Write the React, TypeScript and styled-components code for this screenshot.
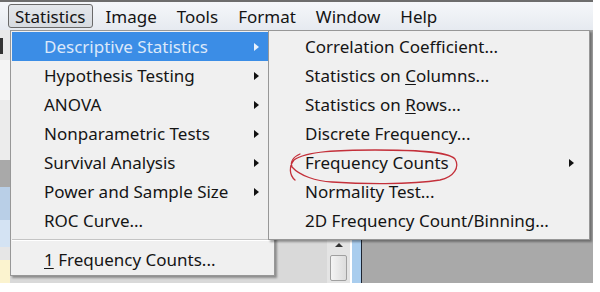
import React from "react";
import styled, { createGlobalStyle } from "styled-components";

const GlobalStyle = createGlobalStyle`
  html, body {
    margin: 0;
    padding: 0;
    background: #fff;
  }
  body {
    font-family: "Noto Sans", "Open Sans", sans-serif;
  }
`;

const menuBarItems = ["Statistics", "Image", "Tools", "Format", "Window", "Help"];

const statItems = [
  { label: "Descriptive Statistics", sub: true },
  { label: "Hypothesis Testing", sub: true },
  { label: "ANOVA", sub: true },
  { label: "Nonparametric Tests", sub: true },
  { label: "Survival Analysis", sub: true },
  { label: "Power and Sample Size", sub: true },
  { label: "ROC Curve...", sub: false },
];

// background window pieces peeking out at the left of the dropdown
const stripBlocks = [
  { h: 30, bg: "#e9e9e9", icon: true },
  { h: 40, bg: "#f4f4f4" },
  { h: 60, bg: "#ececec" },
  { h: 27, bg: "#a9a9a9" },
  { h: 33, bg: "#b9cfe7" },
  { h: 27, bg: "#d4e3f3" },
  { h: 13, bg: "#e6e6e6" },
  { h: 23, bg: "#fbf3cf" },
];

export default function App() {
  return (
    <>
      <GlobalStyle />
      <Screen>
        <MenuBar>
          {menuBarItems.map((name, i) => (
            <MenuBarItem key={name} $open={i === 0}>
              {name}
            </MenuBarItem>
          ))}
        </MenuBar>

        <Workspace>
          <LeftStrip>
            {stripBlocks.map((b, i) => (
              <StripBlock key={i} $h={b.h} $bg={b.bg}>
                {b.icon && <StripIcon />}
              </StripBlock>
            ))}
          </LeftStrip>
          <LightPane />
          <ScrollColumn>
            <ScrollArrow />
            <ScrollThumb />
          </ScrollColumn>
          <BlueEdge />
          <GrayPane />
        </Workspace>

        <Dropdown>
          {statItems.map((item, i) => (
            <MenuItem key={item.label} $active={i === 0}>
              <ItemLabel>{item.label}</ItemLabel>
              {item.sub && <SubArrow $active={i === 0} />}
            </MenuItem>
          ))}
          <Separator />
          <MenuItem>
            <ItemLabel>
              <Mnemonic>1</Mnemonic> Frequency Counts...
            </ItemLabel>
          </MenuItem>
        </Dropdown>

        <SubMenu>
          <SubItem>
            <ItemLabel>Correlation Coefficient...</ItemLabel>
          </SubItem>
          <SubItem>
            <ItemLabel>
              Statistics on <Mnemonic>C</Mnemonic>olumns...
            </ItemLabel>
          </SubItem>
          <SubItem>
            <ItemLabel>
              Statistics on <Mnemonic>R</Mnemonic>ows...
            </ItemLabel>
          </SubItem>
          <SubItem>
            <ItemLabel>Discrete Frequency...</ItemLabel>
          </SubItem>
          <SubItem>
            <ItemLabel>Frequency Counts</ItemLabel>
            <SubArrow />
          </SubItem>
          <SubItem>
            <ItemLabel>Normality Test...</ItemLabel>
          </SubItem>
          <SubItem>
            <ItemLabel>2D Frequency Count/Binning...</ItemLabel>
          </SubItem>
        </SubMenu>

        <Scribble viewBox="0 0 190 50" width="190" height="50">
          <path
            d="M 15 40 C 9 35, 9 26, 14 20 C 26 11, 60 10, 95 10 C 130 10, 168 11, 175 19 C 180 27, 174 37, 160 40 C 130 45, 80 44, 52 42 C 36 41, 20 36, 12 27 C 10 22, 13 17, 20 14"
            fill="none"
            stroke="#c4303a"
            strokeWidth="1.3"
            strokeLinecap="round"
          />
        </Scribble>
      </Screen>
    </>
  );
}

const Screen = styled.div`
  position: relative;
  width: 593px;
  height: 292px;
  overflow: hidden;
  background: #fff;
`;

const MenuBar = styled.div`
  height: 28px;
  border-top: 2px solid #6d6d6d;
  background: linear-gradient(#f5f7fa, #e6eaf0);
  display: flex;
  align-items: center;
  gap: 6px;
  padding-left: 8px;
`;

const MenuBarItem = styled.div<{ $open?: boolean }>`
  height: 24px;
  box-sizing: border-box;
  padding: 0 6px;
  display: flex;
  align-items: center;
  font-size: 17px;
  color: #141414;
  border: 1px solid ${(p) => (p.$open ? "#6a6a6a" : "transparent")};
  border-radius: 3px;
  background: ${(p) => (p.$open ? "linear-gradient(#e4e7eb, #d7dbe0)" : "transparent")};
`;

const Workspace = styled.div`
  display: flex;
  height: 253px;
`;

const LeftStrip = styled.div`
  width: 10px;
  display: flex;
  flex-direction: column;
`;

const StripBlock = styled.div<{ $h: number; $bg: string }>`
  height: ${(p) => p.$h}px;
  flex-shrink: 0;
  background: ${(p) => p.$bg};
`;

const StripIcon = styled.div`
  width: 3px;
  height: 16px;
  margin-top: 8px;
  background: #333;
`;

const LightPane = styled.div`
  width: 317px;
  background: #d9d9d9;
`;

const ScrollColumn = styled.div`
  width: 23px;
  background: #e4e4e4;
  display: flex;
  flex-direction: column;
  align-items: center;
  justify-content: flex-end;
  padding-bottom: 2px;
  box-sizing: border-box;
`;

const ScrollArrow = styled.div`
  width: 0;
  height: 0;
  border-left: 4px solid transparent;
  border-right: 4px solid transparent;
  border-bottom: 4px solid #333;
  margin-bottom: 8px;
`;

const ScrollThumb = styled.div`
  width: 15px;
  height: 24px;
  border: 1px solid #a0a0a0;
  border-radius: 2px;
  background: linear-gradient(90deg, #f4f4f4, #dcdcdc);
`;

const BlueEdge = styled.div`
  width: 9px;
  margin-left: 2px;
  background: #a9cdee;
  border-right: 1px solid #1d2430;
`;

const GrayPane = styled.div`
  flex: 1;
  background: #a9a9a9;
`;

const Dropdown = styled.div`
  position: absolute;
  top: 30px;
  left: 10px;
  width: 265px;
  height: 246px;
  box-sizing: border-box;
  padding: 1px;
  background: #f0f0f0;
  border: 1px solid #979797;
  box-shadow: 2px 2px 2px rgba(0, 0, 0, 0.35);
  display: flex;
  flex-direction: column;
`;

const SubMenu = styled(Dropdown)`
  left: 268px;
  width: 322px;
  height: 210px;
`;

const MenuItem = styled.div<{ $active?: boolean }>`
  height: 29px;
  flex-shrink: 0;
  display: flex;
  align-items: center;
  padding-left: 32px;
  padding-right: 14px;
  font-size: 17px;
  color: ${(p) => (p.$active ? "#dbe8fa" : "#151515")};
  background: ${(p) => (p.$active ? "#3b8de6" : "transparent")};
`;

const SubItem = styled(MenuItem)`
  padding-left: 35px;
  padding-right: 14px;
`;

const ItemLabel = styled.span`
  flex: 1;
  white-space: nowrap;
`;

const Mnemonic = styled.span`
  text-decoration: underline;
  text-underline-offset: 2px;
`;

const SubArrow = styled.span<{ $active?: boolean }>`
  width: 0;
  height: 0;
  border-top: 4px solid transparent;
  border-bottom: 4px solid transparent;
  border-left: 5px solid ${(p) => (p.$active ? "#e8f1fc" : "#111")};
`;

const Separator = styled.div`
  margin: 4px 0 4px 0;
  height: 1px;
  border-bottom: 1px solid #fff;
  background: #c4c4c4;
  flex-shrink: 0;
`;

const Scribble = styled.svg`
  position: absolute;
  left: 280px;
  top: 140px;
  overflow: visible;
`;
